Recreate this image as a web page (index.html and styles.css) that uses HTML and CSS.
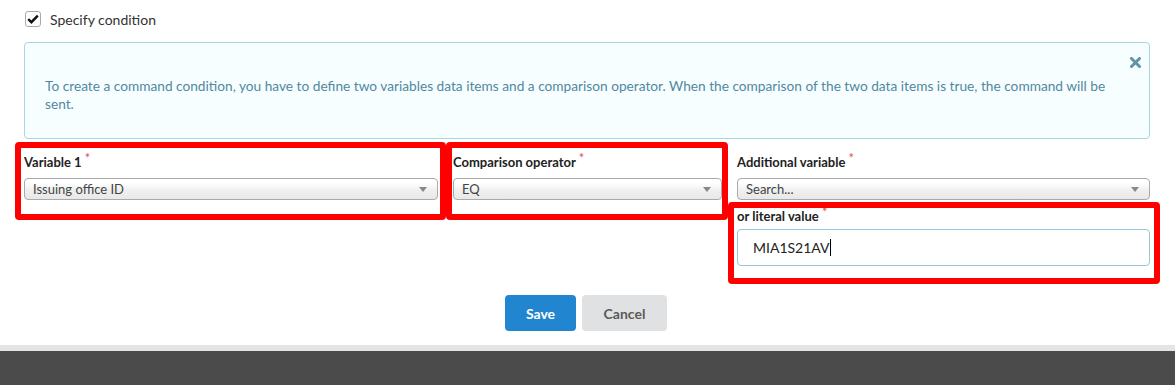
FILE: index.html
```html
<!DOCTYPE html>
<html lang="en">
<head>
    <meta charset="UTF-8">
    <title>Command condition</title>
    <link rel="stylesheet" href="styles.css">
</head>
<body>
    <div class="page">

        <!-- condition toggle -->
        <label class="check-row">
            <span class="check-box">
                <svg width="12" height="10" viewBox="0 0 12 10"><path d="M1.2 5.2 L4.4 8.2 L10.8 1.6" fill="none" stroke="#111" stroke-width="2.4"/></svg>
            </span>
            <span>Specify condition</span>
        </label>

        <!-- info message -->
        <div class="alert">
            <svg class="alert-close" width="11" height="11" viewBox="0 0 11 11"><path d="M1.5 1.5 L9.5 9.5 M9.5 1.5 L1.5 9.5" stroke="#5f93a6" stroke-width="3" stroke-linecap="round"/></svg>
            To create a command condition, you have to define two variables data items and a comparison operator. When the comparison of the two data items is true, the command will be sent.
        </div>

        <!-- fields -->
        <div class="fields">
            <div class="field">
                <label>Variable 1 <sup>*</sup></label>
                <div class="select">Issuing office ID<span class="arrow"></span></div>
            </div>
            <div class="field">
                <label>Comparison operator <sup>*</sup></label>
                <div class="select">EQ<span class="arrow"></span></div>
            </div>
            <div class="field">
                <label>Additional variable <sup>*</sup></label>
                <div class="select placeholder">Search...<span class="arrow"></span></div>
                <label class="sub-label">or literal value <sup>*</sup></label>
                <div class="text-input">MIA1S21AV<span class="caret"></span></div>
            </div>

            <div class="mark mark-1"></div>
            <div class="mark mark-2"></div>
            <div class="mark mark-3"></div>
        </div>

        <div class="actions">
            <button class="btn btn-primary">Save</button>
            <button class="btn btn-secondary">Cancel</button>
        </div>
    </div>

    <div class="footer-line"></div>
    <div class="footer"></div>
</body>
</html>
```

FILE: styles.css
```css
body {
    margin: 0;
    font-family: Lato, "Open Sans", Arial, sans-serif;
    background: white;
    color: #222;
    font-size: 14px;
}

.page {
    padding: 11px 25px 0 24px;
}

.check-row {
    display: flex;
    align-items: center;
    gap: 9px;
    color: #333;
    height: 16px;
    padding-left: 1px;
}

.check-box {
    width: 14px;
    height: 14px;
    border: 1px solid #aaa;
    border-radius: 3px;
    display: flex;
    align-items: center;
    justify-content: center;
}

.alert {
    position: relative;
    margin-top: 15px;
    box-sizing: border-box;
    height: 97px;
    padding: 34px 30px 0 20px;
    border: 1px solid #a9d5de;
    border-radius: 4px;
    background: #f6feff;
    color: #5188a0;
    font-size: 13.7px;
    line-height: 18px;
}

.alert-close {
    position: absolute;
    top: 14px;
    right: 8px;
}

.fields {
    position: relative;
    display: grid;
    grid-template-columns: 414px 269px 1fr;
    column-gap: 15px;
    margin-top: 14px;
}

.field label {
    display: block;
    font-size: 13px;
    font-weight: 700;
    line-height: 18px;
    margin-bottom: 7px;
    color: #222;
}

.field sup {
    color: #d9534f;
    font-weight: 400;
    font-size: 13px;
    vertical-align: 4px;
    line-height: 0;
}

.select {
    position: relative;
    height: 20px;
    line-height: 20px;
    border: 1px solid #aaa;
    border-radius: 4px;
    padding-left: 8px;
    font-size: 13px;
    color: #444;
    background: linear-gradient(#ffffff 20%, #f0f0f0 55%, #e8e8e8);
}

.arrow {
    position: absolute;
    right: 10px;
    top: 8px;
    border-left: 4px solid transparent;
    border-right: 4px solid transparent;
    border-top: 5px solid #888;
}

.field .sub-label {
    margin-top: 7px;
    margin-bottom: 4px;
}

.text-input {
    height: 35px;
    line-height: 35px;
    border: 1px solid #96c8da;
    border-radius: 4px;
    padding-left: 15px;
    font-size: 14px;
    color: #222;
}

.caret {
    display: inline-block;
    width: 1px;
    height: 17px;
    background: #000;
    vertical-align: -3px;
}

.mark {
    position: absolute;
    border: 6px solid #ff0000;
    border-radius: 4px;
    box-sizing: border-box;
}

.mark-1 {
    left: -9px;
    top: -11px;
    width: 431px;
    height: 78px;
}

.mark-2 {
    left: 422px;
    top: -11px;
    width: 282px;
    height: 78px;
}

.mark-3 {
    left: 704px;
    top: 49px;
    width: 432px;
    height: 82px;
}

.actions {
    display: flex;
    justify-content: center;
    gap: 6px;
    margin-top: 29px;
    padding-right: 2px;
}

.btn {
    height: 36px;
    border: none;
    border-radius: 4px;
    font-family: Lato, Arial, sans-serif;
    font-size: 14px;
    font-weight: 700;
    cursor: pointer;
}

.btn-primary {
    width: 71px;
    background: #2185d0;
    color: white;
}

.btn-secondary {
    width: 85px;
    background: #e0e1e2;
    color: #5a5a5a;
}

.footer-line {
    margin-top: 14px;
    height: 6px;
    background: #e4e4e4;
}

.footer {
    height: 40px;
    background: #4b4b4b;
}
```
